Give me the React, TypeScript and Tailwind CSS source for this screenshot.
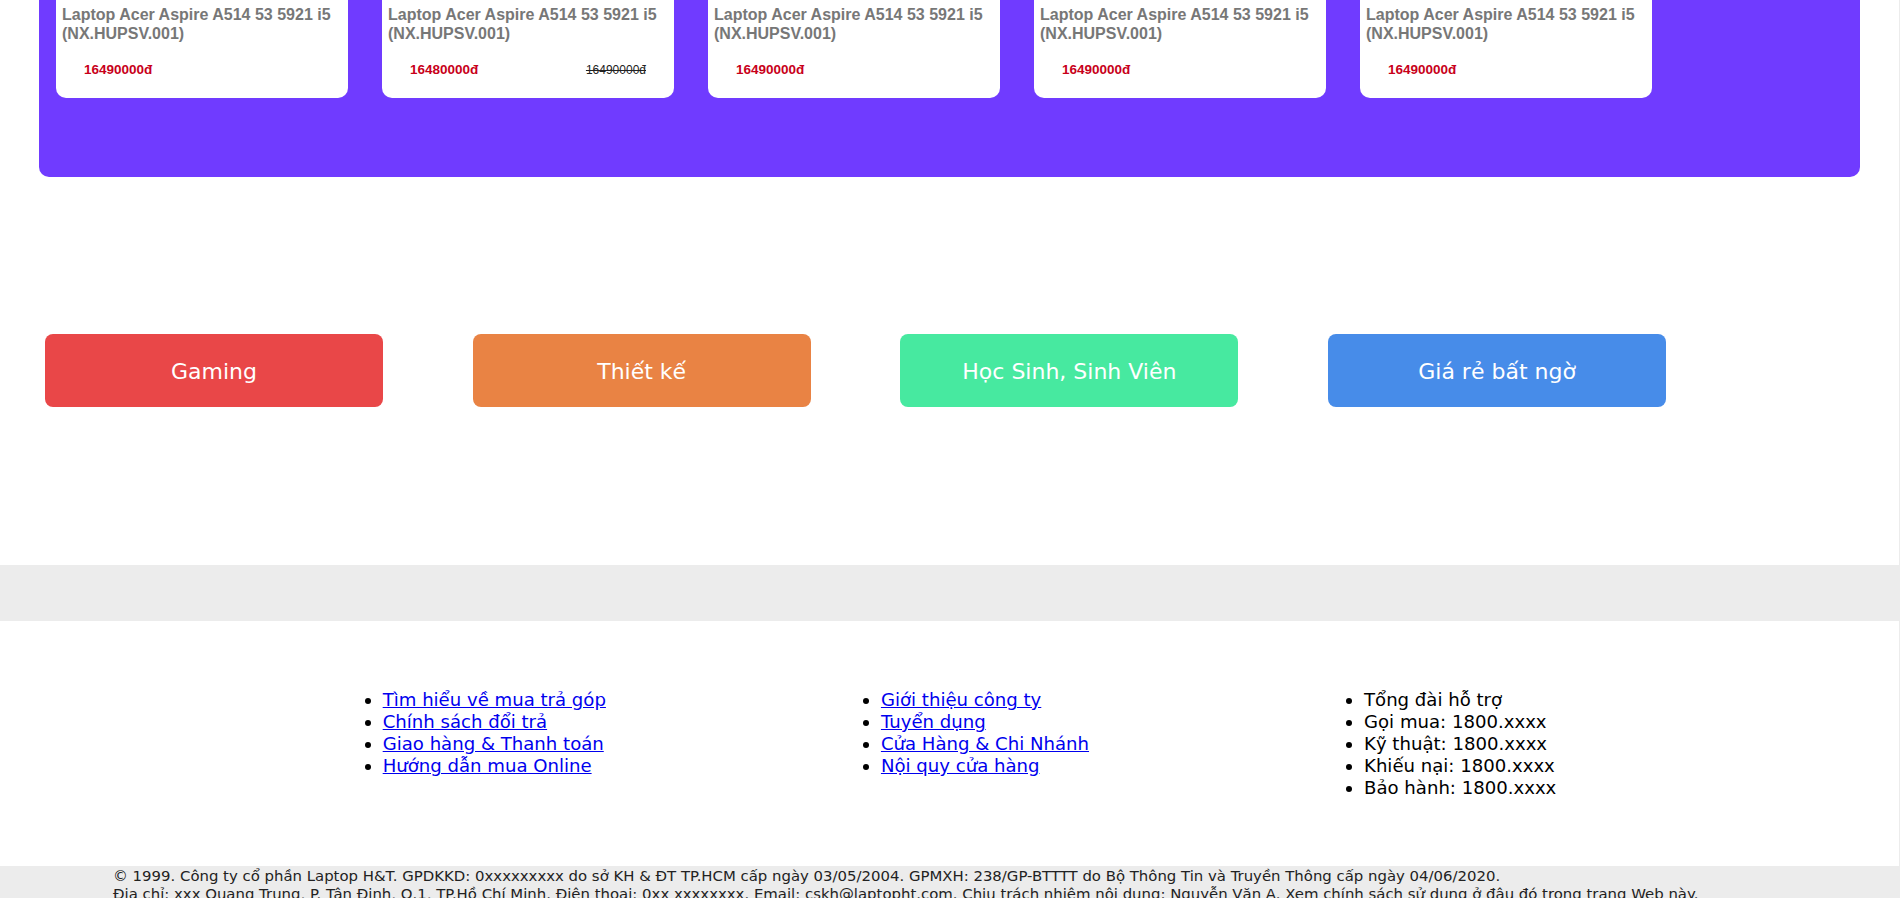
import React from 'react';

interface Product {
  name: string;
  price: string;
  oldPrice?: string;
}

const products: Product[] = [
  { name: 'Laptop Acer Aspire A514 53 5921 i5 (NX.HUPSV.001)', price: '16490000đ' },
  { name: 'Laptop Acer Aspire A514 53 5921 i5 (NX.HUPSV.001)', price: '16480000đ', oldPrice: '16490000đ' },
  { name: 'Laptop Acer Aspire A514 53 5921 i5 (NX.HUPSV.001)', price: '16490000đ' },
  { name: 'Laptop Acer Aspire A514 53 5921 i5 (NX.HUPSV.001)', price: '16490000đ' },
  { name: 'Laptop Acer Aspire A514 53 5921 i5 (NX.HUPSV.001)', price: '16490000đ' },
];

const categories = [
  { label: 'Gaming', cls: 'bg-[#e94748]' },
  { label: 'Thiết kế', cls: 'bg-[#e98344]' },
  { label: 'Học Sinh, Sinh Viên', cls: 'bg-[#47e9a0]' },
  { label: 'Giá rẻ bất ngờ', cls: 'bg-[#478ce9]' },
];

const linksA = ['Tìm hiểu về mua trả góp', 'Chính sách đổi trả', 'Giao hàng & Thanh toán', 'Hướng dẫn mua Online'];
const linksB = ['Giới thiệu công ty', 'Tuyển dụng', 'Cửa Hàng & Chi Nhánh', 'Nội quy cửa hàng'];
const hotline = ['Tổng đài hỗ trợ', 'Gọi mua: 1800.xxxx', 'Kỹ thuật: 1800.xxxx', 'Khiếu nại: 1800.xxxx', 'Bảo hành: 1800.xxxx'];

const ProductCard: React.FC<{ p: Product }> = ({ p }) => (
  <div className="w-[292px] h-[98px] shrink-0 bg-white rounded-b-[10px] pt-[5px]">
    <h3 className="pl-[6px] pr-[10px] text-[16px] leading-[19px] font-bold text-[#777777]">{p.name}</h3>
    <div className="flex items-baseline justify-between px-[28px] mt-[19px]">
      <span className="text-[13.5px] leading-[16px] font-bold text-[#c8001a]">{p.price}</span>
      {p.oldPrice && <span className="text-[12px] leading-[16px] text-[#222] line-through">{p.oldPrice}</span>}
    </div>
  </div>
);

export default function App() {
  return (
    <div className="min-h-screen w-full bg-white border-r border-[#ececec] overflow-hidden">
      {/* product slider */}
      <section className="ml-[39px] w-[1821px] h-[177px] bg-[#703bff] rounded-b-[10px] flex gap-[34px] pl-[17px] font-['Liberation_Sans',Arial,sans-serif]">
        {products.map((p, i) => (
          <ProductCard key={i} p={p} />
        ))}
      </section>

      {/* categories */}
      <div className="flex gap-[89.7px] pl-[45px] mt-[157px] font-['DejaVu_Sans',Verdana,sans-serif]">
        {categories.map((c) => (
          <button
            key={c.label}
            className={`w-[338px] h-[73px] pt-[2px] rounded-[8px] text-white text-[22px] flex items-center justify-center ${c.cls}`}
          >
            {c.label}
          </button>
        ))}
      </div>

      <div className="mt-[158px] h-[56px] bg-[#ececec]" />

      {/* footer */}
      <footer className="font-['DejaVu_Sans',Verdana,sans-serif]">
        <div className="h-[245px] pt-[68px] flex justify-center gap-[235px] text-[18.1px] leading-[22px]">
          <ul className="list-disc pl-[40px]">
            {linksA.map((l) => (
              <li key={l}>
                <a href="#" className="text-[#0000ee] underline">{l}</a>
              </li>
            ))}
          </ul>
          <ul className="list-disc pl-[40px]">
            {linksB.map((l) => (
              <li key={l}>
                <a href="#" className="text-[#0000ee] underline">{l}</a>
              </li>
            ))}
          </ul>
          <ul className="list-disc pl-[40px] text-black">
            {hotline.map((l) => (
              <li key={l}>{l}</li>
            ))}
          </ul>
        </div>
        <div className="bg-[#ececec] pl-[113px] pt-[1px] pb-[4px] text-[14.9px] leading-[18px] text-[#222]">
          <p>
            © 1999. Công ty cổ phần Laptop H&amp;T. GPDKKD: 0xxxxxxxxx do sở KH &amp; ĐT TP.HCM cấp ngày 03/05/2004. GPMXH: 238/GP-BTTTT do Bộ Thông Tin và Truyền Thông cấp ngày 04/06/2020.
          </p>
          <p>
            Địa chỉ: xxx Quang Trung, P. Tân Định, Q.1, TP.Hồ Chí Minh. Điện thoại: 0xx xxxxxxxx. Email: cskh@laptopht.com. Chịu trách nhiệm nội dung: Nguyễn Văn A. Xem chính sách sử dụng ở đâu đó trong trang Web này.
          </p>
        </div>
      </footer>
    </div>
  );
}
